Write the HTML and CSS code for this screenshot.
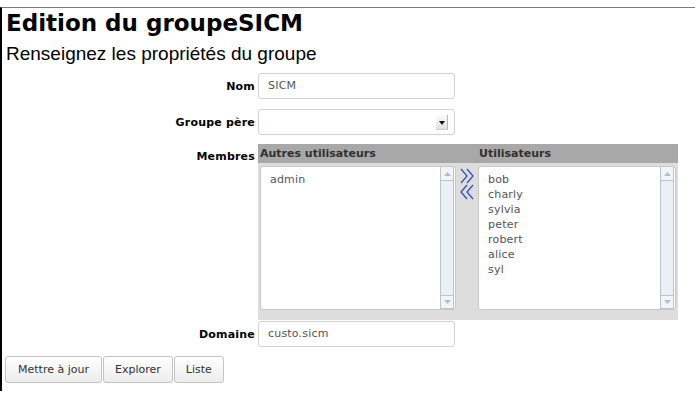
FILE: index.html
```html
<!DOCTYPE html>
<html lang="fr">
<head>
<meta charset="utf-8">
<title>Edition du groupe</title>
<link rel="stylesheet" href="styles.css">
</head>
<body>
<div class="page">
  <h1 class="title">Edition du groupeSICM</h1>
  <h2 class="subtitle">Renseignez les propriétés du groupe</h2>
  <div class="form">
    <div class="row row-nom">
      <label class="label">Nom</label>
      <div class="field"><div class="input">SICM</div></div>
    </div>
    <div class="row row-pere">
      <label class="label">Groupe père</label>
      <div class="field">
        <div class="input select">
          <span class="sel-btn"><svg width="6" height="4" viewBox="0 0 6 4"><path d="M0 0h6L3 4z" fill="#111"/></svg></span>
        </div>
      </div>
    </div>
    <div class="row row-membres">
      <label class="label label-top">Membres</label>
      <div class="field">
        <div class="members">
          <div class="mhead">
            <div class="mh-left">Autres utilisateurs</div>
            <div class="mh-right">Utilisateurs</div>
          </div>
          <div class="mbody">
            <div class="list list-left">
              <div class="items"><div>admin</div></div>
              <div class="scroll">
                <span class="sbtn sup"><svg width="7" height="4" viewBox="0 0 7 4"><path d="M0 4h7L3.5 0z" fill="#b3bdc5"/></svg></span>
                <span class="strack"></span>
                <span class="sbtn sdown"><svg width="7" height="4" viewBox="0 0 7 4"><path d="M0 0h7L3.5 4z" fill="#b3bdc5"/></svg></span>
              </div>
            </div>
            <div class="arrows">
              <svg width="16" height="16" viewBox="0 0 16 16"><path d="M2 1l6 7-6 7M8 1l6 7-6 7" fill="none" stroke="#3a4fb0" stroke-width="1.3"/></svg>
              <svg width="16" height="16" viewBox="0 0 16 16"><path d="M14 1l-6 7 6 7M8 1l-6 7 6 7" fill="none" stroke="#3a4fb0" stroke-width="1.3"/></svg>
            </div>
            <div class="list list-right">
              <div class="items">
                <div>bob</div><div>charly</div><div>sylvia</div><div>peter</div><div>robert</div><div>alice</div><div>syl</div>
              </div>
              <div class="scroll">
                <span class="sbtn sup"><svg width="7" height="4" viewBox="0 0 7 4"><path d="M0 4h7L3.5 0z" fill="#b3bdc5"/></svg></span>
                <span class="strack"></span>
                <span class="sbtn sdown"><svg width="7" height="4" viewBox="0 0 7 4"><path d="M0 0h7L3.5 4z" fill="#b3bdc5"/></svg></span>
              </div>
            </div>
          </div>
        </div>
      </div>
    </div>
    <div class="row row-domaine">
      <label class="label">Domaine</label>
      <div class="field"><div class="input">custo.sicm</div></div>
    </div>
  </div>
  <div class="buttons">
    <button class="btn btn-maj">Mettre à jour</button><button class="btn">Explorer</button><button class="btn">Liste</button>
  </div>
</div>
</body>
</html>
```
FILE: styles.css
```css
html, body {
  margin: 0;
  padding: 0;
  background: #fff;
}
body {
  font-family: "DejaVu Sans", sans-serif;
  font-size: 11px;
  color: #000;
}
.page {
  margin-top: 7px;
  border-top: 1px solid #7a7a7a;
  border-left: 2px solid #000;
  height: 384px;
  box-sizing: border-box;
}
.title {
  margin: 0;
  padding: 2px 0 0 4px;
  font-family: "DejaVu Sans", sans-serif;
  font-weight: bold;
  font-size: 23px;
  line-height: 27px;
}
.subtitle {
  margin: 0;
  padding: 6px 0 0 4px;
  font-family: "Liberation Sans", Arial, sans-serif;
  font-weight: normal;
  font-size: 19px;
  line-height: 22px;
}
.form {
  display: flex;
  flex-direction: column;
  margin-top: 8px;
}
.row {
  display: grid;
  grid-template-columns: 256px auto;
  align-items: center;
}
.row-pere { margin-top: 10px; }
.row-membres { margin-top: 9px; align-items: start; }
.row-domaine { margin-top: 1px; }
.label {
  font-weight: bold;
  text-align: right;
  padding-right: 3px;
  color: #000;
  letter-spacing: 0.2px;
}
.label-top { padding-top: 6px; }
.input {
  box-sizing: border-box;
  width: 197px;
  height: 26px;
  border: 1px solid #d2d2d2;
  border-radius: 3px;
  padding: 0 0 0 9px;
  line-height: 24px;
  color: #555;
  background: #fff;
  letter-spacing: 0.2px;
}
.select {
  position: relative;
}
.sel-btn {
  position: absolute;
  right: 6px;
  top: 5px;
  width: 12px;
  height: 15px;
  box-sizing: border-box;
  background: linear-gradient(#fbfbfb, #e2e2e2);
  border-right: 1px solid #b8b8b8;
  border-bottom: 1px solid #cfcfcf;
  display: flex;
  align-items: center;
  justify-content: center;
  padding-top: 2px;
}
.members {
  width: 420px;
}
.mhead {
  display: grid;
  grid-template-columns: 220px 200px;
  background: #a8a8a8;
  height: 19px;
  line-height: 20px;
  font-weight: bold;
  color: #303030;
}
.mh-left { padding-left: 2px; }
.mh-right { padding-left: 1px; }
.mbody {
  background: #dddddd;
  height: 157px;
  display: flex;
  padding: 3px 0 0 2px;
  box-sizing: border-box;
}
.list {
  box-sizing: border-box;
  height: 144px;
  border: 1px solid #c8c8c8;
  border-radius: 3px;
  background: #fff;
  display: flex;
  justify-content: space-between;
  color: #555;
  letter-spacing: 0.2px;
}
.list-left { width: 196px; }
.list-right { width: 198px; }
.items {
  padding: 5px 0 0 9px;
  line-height: 15px;
}
.scroll {
  width: 14px;
  margin: 0 1px 0 0;
  display: flex;
  flex-direction: column;
  background: #eaf0f6;
  border-left: 1px solid #b9c5cf;
  border-right: 1px solid #b9c5cf;
  box-sizing: border-box;
}
.sbtn {
  height: 14px;
  box-sizing: border-box;
  display: flex;
  align-items: center;
  justify-content: center;
  background: #f2f5f8;
}
.sup { border-bottom: 1px solid #b9c5cf; }
.sdown { border-top: 1px solid #b9c5cf; border-bottom: 1px solid #b9c5cf; }
.strack { flex: 1; }
.arrows {
  width: 22px;
  display: flex;
  flex-direction: column;
  align-items: center;
  padding-top: 2px;
}
.buttons {
  display: flex;
  gap: 1px;
  margin-top: 9px;
  padding-left: 3px;
}
.btn {
  font-family: "DejaVu Sans", sans-serif;
  font-size: 11px;
  color: #333;
  height: 27px;
  margin: 0;
  padding: 0 11px;
  border: 1px solid #c4c4c4;
  border-radius: 3px;
  background: linear-gradient(#ffffff, #ececec);
}
.btn-maj { padding: 0 12px; }
```
